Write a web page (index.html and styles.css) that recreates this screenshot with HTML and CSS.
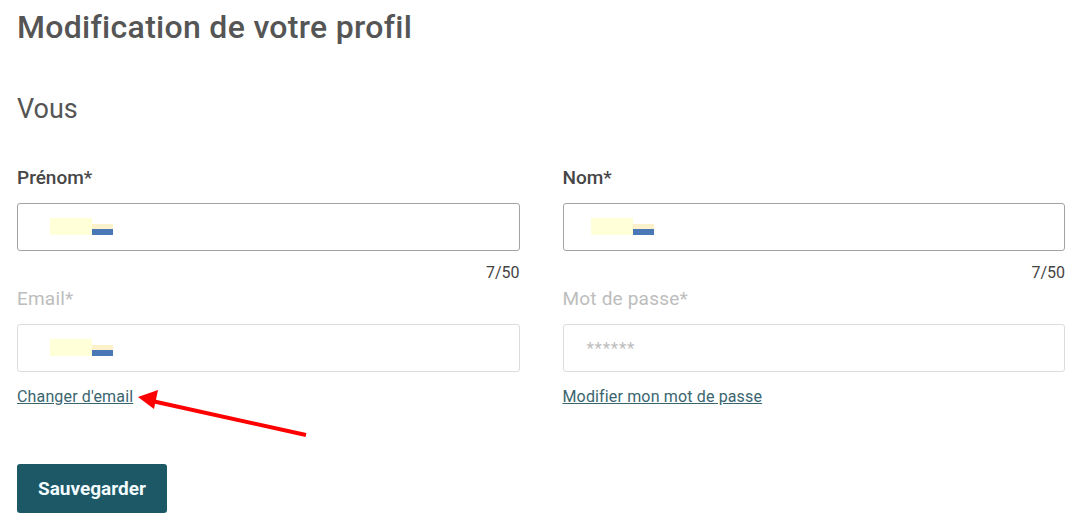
FILE: index.html
```html
<!DOCTYPE html>
<html lang="fr">
<head>
    <meta charset="UTF-8">
    <title>Modification de votre profil</title>
    <link rel="stylesheet" href="styles.css">
</head>
<body>
<div class="page">
    <h1 class="title">Modification de votre profil</h1>
    <h2 class="subtitle">Vous</h2>

    <div class="form-grid">
        <div class="field">
            <label class="label">Prénom*</label>
            <div class="input">
                <span class="mask"><span class="mask-blue"></span></span>
            </div>
            <div class="counter">7/50</div>
        </div>
        <div class="field">
            <label class="label">Nom*</label>
            <div class="input input-right">
                <span class="mask"><span class="mask-blue"></span></span>
            </div>
            <div class="counter">7/50</div>
        </div>

        <div class="field">
            <label class="label disabled">Email*</label>
            <div class="input input-disabled">
                <span class="mask"><span class="mask-blue"></span></span>
            </div>
            <a class="link" href="#">Changer d'email</a>
        </div>
        <div class="field">
            <label class="label disabled">Mot de passe*</label>
            <div class="input input-disabled input-pass">
                <span class="placeholder">******</span>
            </div>
            <a class="link" href="#">Modifier mon mot de passe</a>
        </div>
    </div>

    <button class="btn">Sauvegarder</button>
</div>

<!-- annotation arrow -->
<svg class="arrow" width="1084" height="528" viewBox="0 0 1084 528">
    <line x1="306" y1="435" x2="152" y2="401" stroke="#f00" stroke-width="4"/>
    <polygon points="138,397 158,390 154,409" fill="#f00"/>
</svg>
</body>
</html>
```

FILE: styles.css
```css
body {
    margin: 0;
    background: #fff;
    font-family: Roboto, "Liberation Sans", sans-serif;
    color: #444;
}

.page {
    padding: 8px 19px 0 17px;
}

.title {
    margin: 0;
    font-size: 32px;
    line-height: 38px;
    font-weight: 500;
    letter-spacing: 0.3px;
    color: #555;
}

.subtitle {
    margin: 47px 0 0;
    font-size: 27px;
    line-height: 32px;
    font-weight: 400;
    color: #555;
}

.form-grid {
    display: grid;
    grid-template-columns: 1fr 1fr;
    column-gap: 43px;
    row-gap: 6px;
    margin-top: 42px;
}

.field {
    display: flex;
    flex-direction: column;
}

.label {
    font-size: 19px;
    line-height: 22px;
    font-weight: 500;
    color: #464646;
    margin-bottom: 14px;
}
.label.disabled {
    font-weight: 400;
    color: #bdbdbd;
    letter-spacing: 0.2px;
}

.input {
    display: flex;
    align-items: center;
    height: 48px;
    box-sizing: border-box;
    padding-left: 32px;
    border: 1px solid #a3a3a3;
    border-radius: 3px;
    background: #fff;
}
.input-right {
    padding-left: 27px;
}
.input-disabled {
    border-color: #dcdcdc;
}
.input-pass {
    padding-left: 23px;
}

/* redacted values */
.mask {
    position: relative;
    display: inline-block;
    width: 42px;
    height: 17px;
    margin-bottom: 2px;
    background: #ffffd8;
}
.mask-blue {
    position: absolute;
    left: 42px;
    top: 6px;
    width: 21px;
    height: 11px;
    background: #fdf1cc;
    border-bottom: 6px solid #4a77b6;
    box-sizing: border-box;
}

.placeholder {
    font-size: 17px;
    color: #bdbdbd;
    letter-spacing: 0.8px;
}

.counter {
    margin-top: 13px;
    text-align: right;
    font-size: 16px;
    line-height: 18px;
    color: #444;
}

.link {
    align-self: flex-start;
    margin-top: 16px;
    font-size: 16px;
    line-height: 18px;
    letter-spacing: 0.15px;
    color: #3a6570;
    text-decoration: underline;
}

.btn {
    display: block;
    margin-top: 58px;
    width: 150px;
    height: 49px;
    border: none;
    border-radius: 3px;
    background: #1d5866;
    color: #f2fbff;
    font-family: Roboto, "Liberation Sans", sans-serif;
    font-size: 19px;
    font-weight: 700;
    cursor: pointer;
}

.arrow {
    position: absolute;
    top: 0;
    left: 0;
    pointer-events: none;
}
```
